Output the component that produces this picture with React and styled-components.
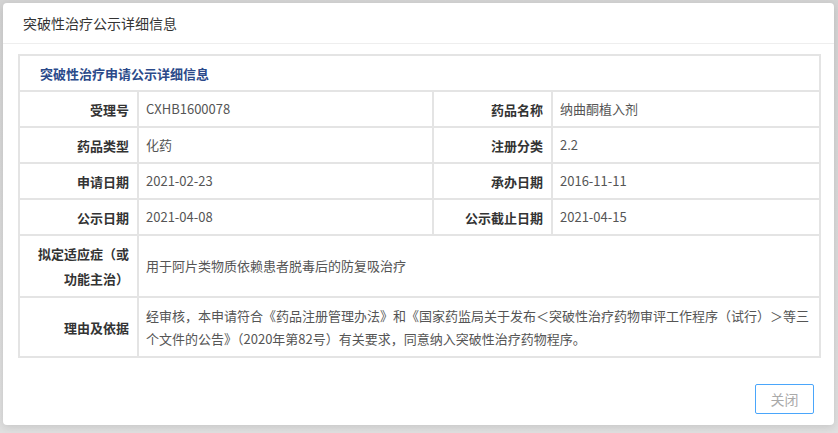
import React from "react";
import styled, { createGlobalStyle } from "styled-components";

const GlobalStyle = createGlobalStyle`
  html, body {
    margin: 0;
    padding: 0;
    background: #d9d9d9;
    font-family: "Noto Sans CJK SC", "Noto Sans", sans-serif;
  }
`;

const rows = [
  [
    { label: "受理号", value: "CXHB1600078" },
    { label: "药品名称", value: "纳曲酮植入剂" },
  ],
  [
    { label: "药品类型", value: "化药" },
    { label: "注册分类", value: "2.2" },
  ],
  [
    { label: "申请日期", value: "2021-02-23" },
    { label: "承办日期", value: "2016-11-11" },
  ],
  [
    { label: "公示日期", value: "2021-04-08" },
    { label: "公示截止日期", value: "2021-04-15" },
  ],
];

export default function App() {
  return (
    <Page>
      <GlobalStyle />
      <Modal>
        <Header>突破性治疗公示详细信息</Header>
        <Body>
          <Table>
            <colgroup>
              <col style={{ width: 119 }} />
              <col style={{ width: 295 }} />
              <col style={{ width: 119 }} />
              <col style={{ width: 268 }} />
            </colgroup>
            <tbody>
              <tr>
                <TitleCell colSpan={4}>突破性治疗申请公示详细信息</TitleCell>
              </tr>
              {rows.map((row, i) => (
                <tr key={i}>
                  {row.map((c) => (
                    <React.Fragment key={c.label}>
                      <Label>{c.label}</Label>
                      <Value>{c.value}</Value>
                    </React.Fragment>
                  ))}
                </tr>
              ))}
              <tr>
                <Label $h={60}>拟定适应症（或功能主治）</Label>
                <Value colSpan={3}>用于阿片类物质依赖患者脱毒后的防复吸治疗</Value>
              </tr>
              <tr>
                <Label $h={58}>理由及依据</Label>
                <Value colSpan={3} $multi>
                  经审核，本申请符合《药品注册管理办法》和《国家药监局关于发布＜突破性治疗药物审评工作程序（试行）＞等三个文件的公告》（2020年第82号）有关要求，同意纳入突破性治疗药物程序。
                </Value>
              </tr>
            </tbody>
          </Table>
        </Body>
        <Footer>
          <CloseBtn type="button">关闭</CloseBtn>
        </Footer>
      </Modal>
    </Page>
  );
}

const Page = styled.div`
  width: 838px;
  height: 433px;
  padding: 3px 0 0 3px;
  box-sizing: border-box;
  background: linear-gradient(to bottom, #d4d4d4, #e0e0e0);
  overflow: hidden;
`;

const Modal = styled.div`
  width: 831px;
  height: 422px;
  background: #fff;
  border-radius: 4px;
  box-shadow: 0 2px 8px rgba(0, 0, 0, 0.12);
  display: flex;
  flex-direction: column;
`;

const Header = styled.div`
  height: 40px;
  line-height: 40px;
  padding-left: 20px;
  font-size: 14px;
  color: #333;
  border-bottom: 1px solid #eee;
`;

const Body = styled.div`
  padding: 10px 14px 0 15px;
`;

const Table = styled.table`
  width: 801px;
  border-collapse: collapse;
  table-layout: fixed;
  border: 2px solid #e4e4e4;
  font-size: 13px;

  td {
    border: 2px solid #e4e4e4;
  }
`;

const TitleCell = styled.td`
  height: 34px;
  padding: 0 0 0 20px;
  font-weight: bold;
  color: #2b4a8a;
`;

const Label = styled.td`
  height: ${(p) => (p.$h ? `${p.$h}px` : "34px")};
  padding: ${(p) => (p.$h ? "0 8px 0 16px" : "0 8px")};
  text-align: right;
  font-weight: bold;
  color: #333;
  line-height: 25px;
`;

const Value = styled.td`
  padding: ${(p) => (p.$multi ? "0 4px 0 7px" : "0 8px 0 7px")};
  color: #555;
  line-height: ${(p) => (p.$multi ? "23px" : "20px")};
`;

const Footer = styled.div`
  display: flex;
  justify-content: flex-end;
  margin-top: auto;
  padding: 0 20px 11px 0;
`;

const CloseBtn = styled.button`
  width: 59px;
  height: 30px;
  border: 1px solid #4aa6fb;
  border-radius: 2px;
  background: #fff;
  color: #aaa;
  font-size: 14px;
  font-family: "Noto Sans CJK SC", sans-serif;
  padding: 0;
`;
